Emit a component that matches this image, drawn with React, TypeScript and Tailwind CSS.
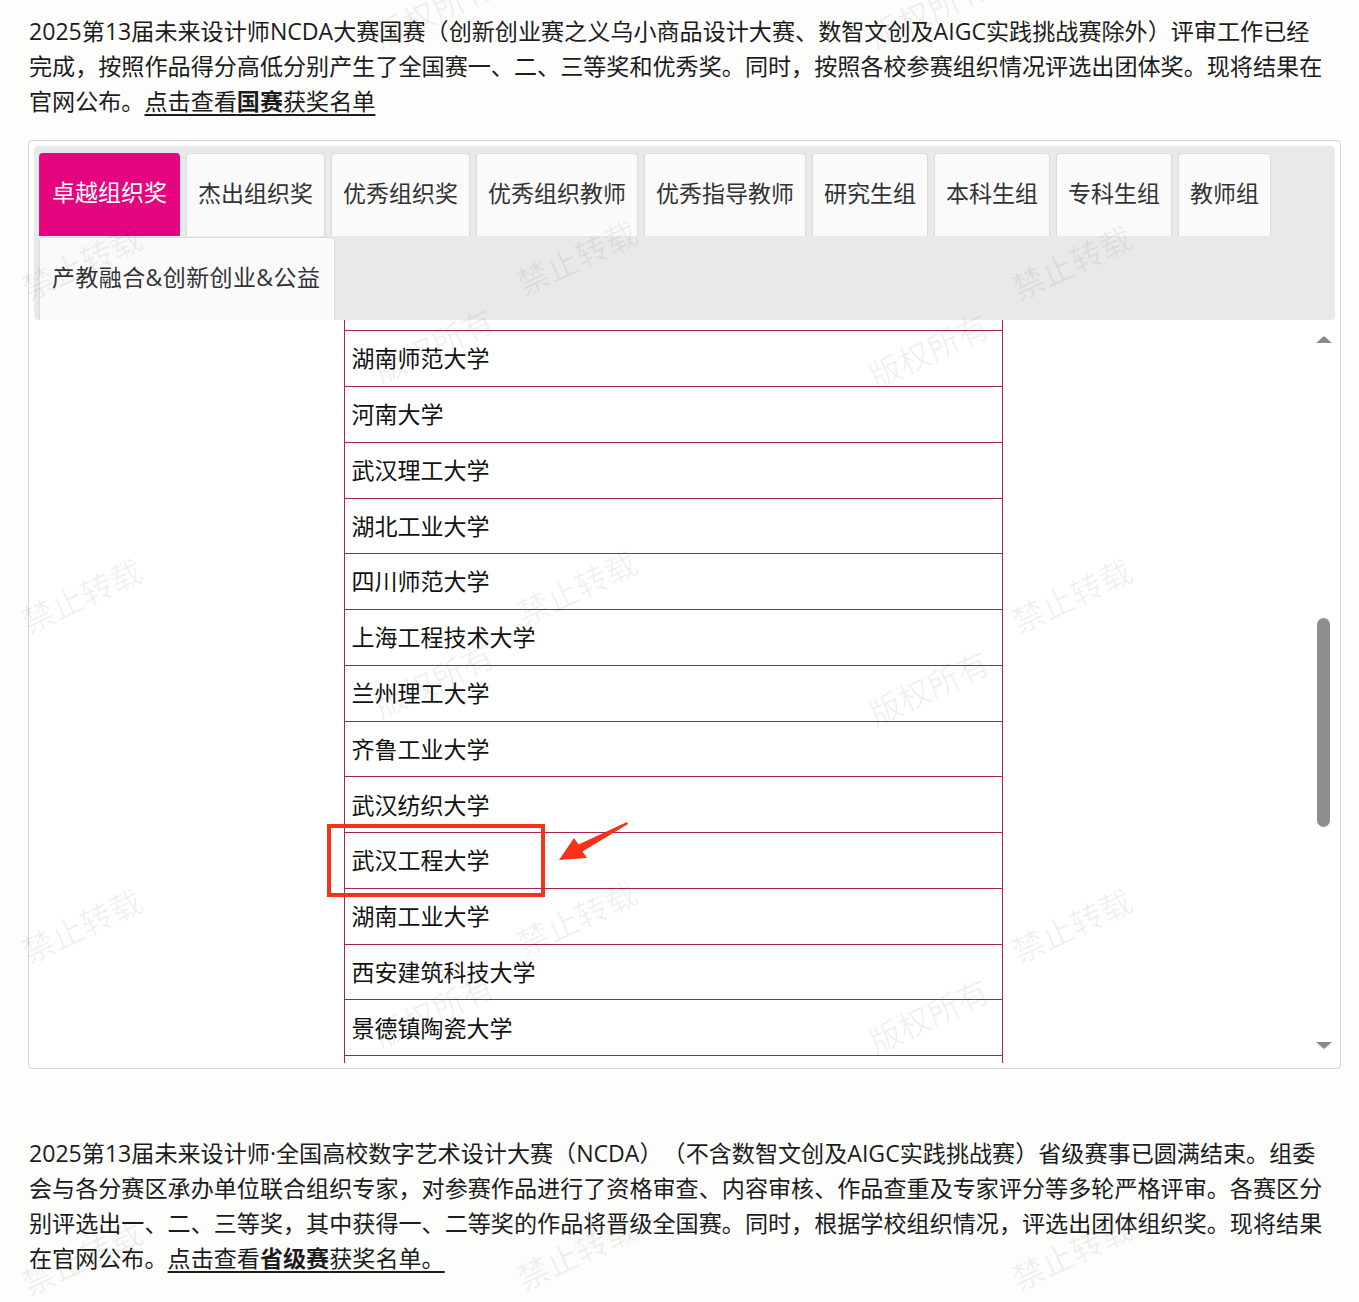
import React from "react";

const tabs = [
  "卓越组织奖",
  "杰出组织奖",
  "优秀组织奖",
  "优秀组织教师",
  "优秀指导教师",
  "研究生组",
  "本科生组",
  "专科生组",
  "教师组",
  "产教融合&创新创业&公益",
];

// rows currently in view of the scrolled list ("" = rows partly cut off at the edges)
const schools = [
  "",
  "湖南师范大学",
  "河南大学",
  "武汉理工大学",
  "湖北工业大学",
  "四川师范大学",
  "上海工程技术大学",
  "兰州理工大学",
  "齐鲁工业大学",
  "武汉纺织大学",
  "武汉工程大学",
  "湖南工业大学",
  "西安建筑科技大学",
  "景德镇陶瓷大学",
  "",
];

const marks = [
  { text: "版权所有", cls: "left-[370px] top-[-5px]" },
  { text: "版权所有", cls: "left-[865px] top-[-5px]" },
  { text: "禁止转载", cls: "left-[18px] top-[247px]" },
  { text: "禁止转载", cls: "left-[513px] top-[242px]" },
  { text: "禁止转载", cls: "left-[1008px] top-[247px]" },
  { text: "版权所有", cls: "left-[370px] top-[330px]" },
  { text: "版权所有", cls: "left-[865px] top-[335px]" },
  { text: "禁止转载", cls: "left-[18px] top-[580px]" },
  { text: "禁止转载", cls: "left-[513px] top-[572px]" },
  { text: "禁止转载", cls: "left-[1008px] top-[580px]" },
  { text: "版权所有", cls: "left-[370px] top-[665px]" },
  { text: "版权所有", cls: "left-[865px] top-[672px]" },
  { text: "禁止转载", cls: "left-[18px] top-[910px]" },
  { text: "禁止转载", cls: "left-[513px] top-[902px]" },
  { text: "禁止转载", cls: "left-[1008px] top-[910px]" },
  { text: "版权所有", cls: "left-[370px] top-[995px]" },
  { text: "版权所有", cls: "left-[865px] top-[1000px]" },
  { text: "禁止转载", cls: "left-[18px] top-[1242px]" },
  { text: "禁止转载", cls: "left-[513px] top-[1237px]" },
  { text: "禁止转载", cls: "left-[1008px] top-[1237px]" },
];

function Highlight() {
  return (
    <>
      <span className="absolute -left-[18px] -top-[9px] w-[218px] h-[73px] border-4 border-[#f8311a] pointer-events-none" />
      <svg
        className="absolute left-[212px] -top-[12px] pointer-events-none"
        width="72"
        height="42"
        viewBox="0 0 72 42"
      >
        <polygon points="70,1 71,3 25.5,30.5 30,37 2,39 17,17 21.5,23.5" fill="#f8311a" />
      </svg>
    </>
  );
}

export default function App() {
  return (
    <div
      className="relative min-h-[1302px] bg-[#fdfdfc] pl-[28px] pr-[18px] pt-[14px] text-[#1c1c1c] overflow-hidden [text-spacing-trim:space-all]"
      style={{ fontFamily: '"Open Sans", "Noto Sans CJK SC", sans-serif' }}
    >
      <p className="pl-[1px] text-[23.1px] leading-[35px] whitespace-nowrap">
        2025第13届未来设计师NCDA大赛国赛（创新创业赛之义乌小商品设计大赛、数智文创及AIGC实践挑战赛除外）评审工作已经
        <br />
        完成，按照作品得分高低分别产生了全国赛一、二、三等奖和优秀奖。同时，按照各校参赛组织情况评选出团体奖。现将结果在
        <br />
        官网公布。
        <a href="#" className="underline decoration-[1.5px] underline-offset-[4px]">
          点击查看<b>国赛</b>获奖名单
        </a>
      </p>

      <div className="mt-[21px] rounded-[4px] border border-[#d3d3d3] bg-white p-[5px]">
        <div className="flex flex-wrap gap-x-[6px] gap-y-[1px] rounded-[4px] bg-[#e9e9ea] pl-[5px] pt-[7px]">
          {tabs.map((t, i) => (
            <div
              key={t}
              className={
                i === 0
                  ? "flex h-[83px] items-center rounded-t-[4px] bg-[#e5057f] px-[13px] pb-[4px] text-[23px] text-white"
                  : i === tabs.length - 1
                  ? "flex h-[83px] w-[296px] items-center rounded-t-[4px] border border-b-0 border-[#dcdcdc] bg-[#fafafa] px-[12px] pb-[4px] text-[23px] tracking-[0.4px] text-[#333]"
                  : "flex h-[83px] items-center rounded-t-[4px] border border-b-0 border-[#dcdcdc] bg-[#fafafa] px-[11px] pb-[4px] text-[23px] text-[#333]"
              }
            >
              {t}
            </div>
          ))}
        </div>

        <div className="flex h-[743px]">
          <div className="flex-1 overflow-hidden">
            <div className="mx-auto -mt-[45.5px] w-[659px] border-x border-[#a8234f]">
              {schools.map((s, i) => (
                <div
                  key={i}
                  className={
                    "relative flex h-[55.77px] items-center pl-[7px] text-[23px] text-[#111] " +
                    (i === 0 ? "" : "border-t border-[#a8234f]")
                  }
                >
                  {s}
                  {s === "武汉工程大学" && <Highlight />}
                </div>
              ))}
            </div>
          </div>

          {/* scrollbar */}
          <div className="flex w-[23px] flex-col items-center pt-[16px] pb-[14px]">
            <div className="h-0 w-0 border-x-[8px] border-b-[7px] border-x-transparent border-b-[#8a8a8a]" />
            <div className="flex-1">
              <div className="mt-[275px] h-[209px] w-[13px] rounded-full bg-[#8e8e8e]" />
            </div>
            <div className="h-0 w-0 border-x-[8px] border-t-[7px] border-x-transparent border-t-[#8a8a8a]" />
          </div>
        </div>
      </div>

      <p className="mt-[67px] pl-[1px] text-[23.1px] leading-[35px] whitespace-nowrap">
        2025第13届未来设计师·全国高校数字艺术设计大赛（NCDA）（不含数智文创及AIGC实践挑战赛）省级赛事已圆满结束。组委
        <br />
        会与各分赛区承办单位联合组织专家，对参赛作品进行了资格审查、内容审核、作品查重及专家评分等多轮严格评审。各赛区分
        <br />
        别评选出一、二、三等奖，其中获得一、二等奖的作品将晋级全国赛。同时，根据学校组织情况，评选出团体组织奖。现将结果
        <br />
        在官网公布。
        <a href="#" className="underline decoration-[1.5px] underline-offset-[4px]">
          点击查看<b>省级赛</b>获奖名单。
        </a>
      </p>

      {/* faint site watermark */}
      <div className="pointer-events-none absolute inset-0 z-10">
        {marks.map((m, i) => (
          <span
            key={i}
            className={"absolute -rotate-[25deg] text-[32px] leading-none text-black/[0.06] " + m.cls}
          >
            {m.text}
          </span>
        ))}
      </div>
    </div>
  );
}
